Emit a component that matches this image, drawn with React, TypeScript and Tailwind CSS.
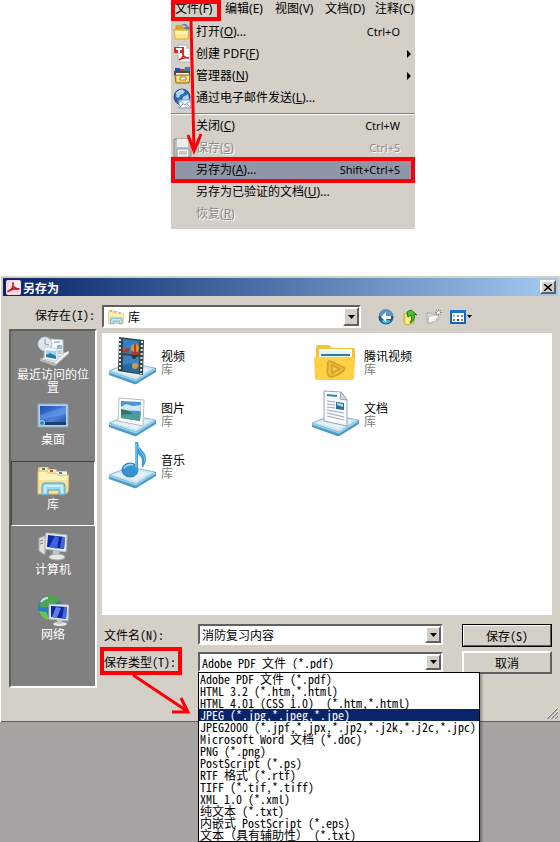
import { useState } from "react";
import type { ReactNode } from "react";

const menus = [
  { name: "文件", hotkey: "F" },
  { name: "编辑", hotkey: "E" },
  { name: "视图", hotkey: "V" },
  { name: "文档", hotkey: "D" },
  { name: "注释", hotkey: "C" },
];

const fileTypes = [
  "Adobe PDF 文件 (*.pdf)",
  "HTML 3.2 (*.htm,*.html)",
  "HTML 4.01 (CSS 1.0)  (*.htm,*.html)",
  "JPEG (*.jpg,*.jpeg,*.jpe)",
  "JPEG2000 (*.jpf,*.jpx,*.jp2,*.j2k,*.j2c,*.jpc)",
  "Microsoft Word 文档 (*.doc)",
  "PNG (*.png)",
  "PostScript (*.ps)",
  "RTF 格式 (*.rtf)",
  "TIFF (*.tif,*.tiff)",
  "XML 1.0 (*.xml)",
  "纯文本 (*.txt)",
  "内嵌式 PostScript (*.eps)",
  "文本（具有辅助性） (*.txt)",
];

const sunken =
  "border-2 border-t-[#606060] border-l-[#606060] border-r-white border-b-white bg-white";
const raised =
  "border-2 border-t-white border-l-white border-r-[#606060] border-b-[#606060] bg-[#d4d0c8]";

/* ---------- menu icons ---------- */

function OpenIcon() {
  return (
    <svg width="20" height="20" viewBox="0 0 20 20">
      <path d="M2 6l1-3h5l2 2h6v12H2z" fill="#dba52a" />
      <path d="M8 4c2-3 6-3 7 1l2-1-1 5-5-3 2-1c-1-2-3-2-5-1z" fill="#5f7fb4" />
      <path d="M1 8h15l-1 9H2z" fill="#ffe68c" stroke="#d8ae40" />
      <path d="M2 9h13l-1 3H3z" fill="#fff3b4" />
    </svg>
  );
}

function PdfIcon() {
  return (
    <svg width="20" height="20" viewBox="0 0 20 20">
      <path d="M5 1h8l4 4v13H5z" fill="#fafafa" stroke="#b4b4b4" />
      <path d="M13 1v4h4z" fill="#ccc" />
      <path d="M1 3h10v6H1z" fill="#c9332e" />
      <path d="M3 4h6v2H7v3H5V6H3z" fill="#fff" />
      <path
        d="M6 16c4-2 5-4 4-8-1 4 2 6 6 6-4-1-7 0-10 2z"
        fill="none"
        stroke="#d8201c"
        strokeWidth="1.500"
      />
    </svg>
  );
}

function OrganizerIcon() {
  return (
    <svg width="20" height="20" viewBox="0 0 20 20">
      <path d="M2 2h5v4H2z" fill="#2850b0" />
      <path d="M7 3h4v3H7z" fill="#e03020" />
      <path d="M12 1h5v5h-5z" fill="#3b7ac0" />
      <path d="M11 3h3v3h-3z" fill="#3b9a40" />
      <path d="M1 5h16v4H1z" fill="#4a4a4a" />
      <path d="M3 7h13v2H3z" fill="#f8f8f8" />
      <path d="M2 9h15l-1 8H3z" fill="#f3ca55" stroke="#93691a" />
      <path d="M4 10h12v5H4z" fill="#ffe68a" />
      <path d="M7 11h6v3H7z" fill="#fff" stroke="#a87c20" />
    </svg>
  );
}

function MailIcon() {
  return (
    <svg width="20" height="21" viewBox="0 0 20 21">
      <circle cx="9" cy="9" r="8" fill="#2d6aae" stroke="#254c88" />
      <path d="M4 4c3-2 6-2 8-1l-2 3-3 1-1 3-3-1zM10 9l5-3 1 5-4 3-3-2z" fill="#a9d3f3" />
      <path d="M3 6c2-3 4-4 7-4" stroke="#e8f6ff" fill="none" />
      <path d="M6 12h12v8H6z" fill="#f4f8ff" stroke="#7c9ac4" />
      <path d="M6 12l6 5 6-5M6 20l4-4M18 20l-4-4" fill="none" stroke="#7c9ac4" />
    </svg>
  );
}

function DiskIcon() {
  return (
    <svg width="20" height="20" viewBox="0 0 20 20">
      <path d="M1 1h15l2 2v16H1z" fill="#bdbdbb" stroke="#8b8b89" />
      <path d="M4 1h11v8H4z" fill="#ededeb" />
      <path d="M4 11h12v8H4z" fill="#f7f7f5" stroke="#999" />
      <path d="M6 14h8M6 16h8" stroke="#999" />
    </svg>
  );
}

/* ---------- dialog icons ---------- */

function AcrobatIcon() {
  return (
    <svg width="15" height="15" viewBox="0 0 15 15">
      <rect width="15" height="15" rx="2" fill="#f9d9e2" />
      <path d="M1 9l6-8h6l1 7-8 2z" fill="#fff" opacity=".6" />
      <path
        d="M1.500 11.500c4-1 6.500-5 5.500-9-1 4 2 7 6.500 6.500-4-1-8 0-12 2.500z"
        fill="none"
        stroke="#c4122f"
        strokeWidth="1.600"
      />
    </svg>
  );
}

function LibraryIcon({ size }: { size: number }) {
  return (
    <svg width={size} height={size} viewBox="0 0 32 32">
      <path d="M1 4q0-2 2-2h8l1 2h7l1 2h10v23H1z" fill="#e9cf7d" />
      <path d="M3 3h7v3H3z" fill="#f5f3d6" />
      <path d="M5 3h3v2H5z" fill="#2f9b3c" />
      <path d="M11 5h8v3h-8z" fill="#fff6d8" />
      <path d="M13 5h3v2h-3z" fill="#e2402b" />
      <path d="M19 7h11v3H19z" fill="#fff" />
      <path d="M22 7h3v2h-3z" fill="#2b8fb0" />
      <path d="M1 6h9l2 2h7l2 2h11l-1 17-4 2H1z" fill="#f7e298" stroke="#dfc068" />
      <path d="M2 7h7l2 2h8l2 2h9v4H2z" fill="#fff3bd" />
      <path
        d="M5 30V21q0-3 3-3h17q3 0 3 3v9h-6v-5H11v5z"
        fill="#9bd6f2"
        stroke="#4a9fd0"
      />
      <path d="M8 28v-6q0-1 1-1h15q1 0 1 1v6" fill="none" stroke="#def6ff" strokeWidth="1.500" />
    </svg>
  );
}

function RecentIcon() {
  return (
    <svg width="32" height="32" viewBox="0 0 32 32">
      <path d="M3 24l16-5 13-2-14 11z" fill="#e6e6e4" />
      <path d="M3 24l15 4v3L3 26zM18 28l14-11v2L18 31z" fill="#b8b8b6" />
      <path d="M14 4l12 1v17l-12-2z" fill="#f7fbff" stroke="#b9c4cc" />
      <path d="M17 7h6" stroke="#4ba0b8" />
      <path d="M20 10h5v4h-5z" fill="#8bb8d0" />
      <path d="M20 16h5M20 18h5" stroke="#8aa" />
      <circle cx="8" cy="9" r="7" fill="#dfe6ec" stroke="#b5c0c9" />
      <path d="M8 4v5l4 1" fill="none" stroke="#8495a2" />
      <path d="M8 12l12 2v12L7 24z" fill="#fff" stroke="#c3d1da" />
      <path d="M9 15l10 1v8L9 22z" fill="#9ad4ee" />
      <path d="M9 20l4-2 6 3v3L9 22z" fill="#287ba9" />
      <path d="M18 28l13-12 1 1-13 12z" fill="#fff" />
    </svg>
  );
}

function DesktopIcon() {
  return (
    <svg width="32" height="32" viewBox="0 0 32 32">
      <defs>
        <linearGradient id="desk" x1="0" y1="0" x2="1" y2="1">
          <stop offset="0" stopColor="#1d4fb8" />
          <stop offset="0.600" stopColor="#4f83e0" />
          <stop offset="1" stopColor="#1c479e" />
        </linearGradient>
      </defs>
      <path d="M1 4h30v23H1z" fill="#b9d2ea" stroke="#8ba4c0" />
      <path d="M3 6h26v19H3z" fill="url(#desk)" />
      <path d="M29 6v8L3 20v-5z" fill="#7eacef" opacity=".4" />
      <path d="M3 22h26v3H3z" fill="#20406c" />
      <circle cx="5" cy="23" r="2.500" fill="#3d7fa5" stroke="#a9dbef" />
    </svg>
  );
}

function ComputerIcon() {
  return (
    <svg width="32" height="32" viewBox="0 0 32 32">
      <path d="M2 8l6-2v19l-6-4z" fill="#dedfda" stroke="#aaa" />
      <path d="M3 11l3-1M3 14l3-1" stroke="#777" />
      <path d="M16 21h6l1 5h-8z" fill="#c5c9cb" />
      <ellipse cx="20" cy="27" rx="8" ry="3" fill="#e5e6e5" stroke="#a9adaf" />
      <path d="M9 3l21 2-1 17-21-3z" fill="#e8eef1" stroke="#b5bdc1" />
      <path d="M11 5l17 2-1 12-17-2z" fill="#0b24a8" />
      <path d="M18 6l4 1-2 12-8-2z" fill="#4a74e6" opacity=".8" />
      <path d="M25 7h3l-1 12-4-1z" fill="#4467d8" />
    </svg>
  );
}

function NetworkIcon() {
  return (
    <svg width="32" height="32" viewBox="0 0 32 32">
      <circle cx="13" cy="13" r="12" fill="#2a7bc4" />
      <path d="M9 2c6-3 12 0 14 4l-6 3-3-1-4 4-4 1-4-2c1-4 4-7 7-9z" fill="#4da54c" />
      <path d="M2 16l7 1 3 6-1 2c-5-1-8-5-9-9z" fill="#6fc24c" />
      <path d="M4 7c2-3 4-4 7-4" stroke="#c1ecef" strokeWidth="2" fill="none" />
      <ellipse cx="23" cy="29" rx="7" ry="2" fill="#e5e6e5" />
      <path d="M20 24h5v5h-5z" fill="#c5c9cb" />
      <path d="M12 9l20 1-1 16-19-2z" fill="#e3ebf1" stroke="#a9b8c0" />
      <path d="M14 11l16 1-1 12-15-2z" fill="#0b24a8" />
      <path d="M19 12l5 1-4 10-5-1z" fill="#5c7fe6" />
      <path d="M27 12h3l-1 12-4-1z" fill="#4467d8" />
    </svg>
  );
}

function Tray({ children }: { children: ReactNode }) {
  return (
    <svg width="48" height="48" viewBox="0 0 48 48">
      <path d="M1 34v4l25 9q2 1 4-1l18-11v-4z" fill="#4c9ac6" />
      <path d="M1 34l20-8 26 5-19 12z" fill="#cfe6f2" stroke="#8cbdd6" />
      <path d="M6 34l15-6 20 4-13 8z" fill="#e4f1f8" />
      <path d="M1 35l27 9 19-12" fill="none" stroke="#8fd0ec" strokeWidth="1.500" />
      {children}
    </svg>
  );
}

function VideoIcon() {
  return (
    <Tray>
      <path d="M11 0l25 3-1 35-25-4z" fill="#3a4845" />
      <path d="M15 2l16 2v14l-16-2z" fill="#2f80c8" />
      <path d="M15 18l16 2v16l-16-3z" fill="#3a83c4" />
      <path d="M15 12l6-1v5l-6-1zM24 14l7 1v3h-7z" fill="#a53a34" />
      <path d="M15 10h2v4h-2z" fill="#d84036" />
      <circle cx="27" cy="11" r="4" fill="#d99432" />
      <path d="M26 7h2v8h-2z" fill="#b8382b" />
      <path d="M23 18h7l-3 4h-2z" fill="#263c38" />
      <path d="M15 28l7-2 9 4v6l-16-3z" fill="#2869a0" />
      <circle cx="27" cy="29" r="3" fill="#d39a40" />
      <path d="M12 2v32" stroke="#dbe8e1" strokeWidth="2" strokeDasharray="2 2" />
      <path d="M34 4l-1 33" stroke="#dbe8e1" strokeWidth="2" strokeDasharray="2 2" />
    </Tray>
  );
}

function PictureIcon() {
  return (
    <Tray>
      <path d="M11 9l25 2-1 26-25-5z" fill="#fff" stroke="#b5bcc0" />
      <path d="M13 12l20 1-1 19-19-3z" fill="#4b93d8" />
      <path d="M13 18l5-3 7 2 8-1-1 6-19-1z" fill="#d3eaf6" />
      <path d="M13 20l5 1 8 4-13 1z" fill="#35785c" />
      <path d="M13 26l10-1 10-2-1 9-19-3z" fill="#4c9d94" />
    </Tray>
  );
}

function MusicIcon() {
  return (
    <Tray>
      <ellipse cx="22" cy="29" rx="8" ry="7" fill="#3393d2" stroke="#2379b6" />
      <path d="M27 1h3c0 8 9 9 8 18-1 4-2 6-4 8 0-8 1-10-4-14v17h-3z" fill="#379cda" />
      <path d="M28 2v24" stroke="#a7daf5" />
      <path d="M30 5c1 6 7 8 7 15" fill="none" stroke="#8acaf0" />
      <path d="M16 27q4-5 9-3" fill="none" stroke="#aaddf7" strokeWidth="1.500" />
    </Tray>
  );
}

function DocumentIcon() {
  return (
    <Tray>
      <path d="M13 2l17 1 6 8v26l-23-5z" fill="#f7fafd" stroke="#97a4ae" />
      <path d="M30 3l-1 7 7 1z" fill="#ccdce8" stroke="#97a4ae" />
      <path d="M16 6l10 1" stroke="#2a8c9c" strokeWidth="2" />
      <path
        d="M16 12l8 1M16 15l8 1M16 18l8 1M16 21l17 3M16 24l17 4M16 27l17 4"
        stroke="#a3a6b6"
      />
      <path d="M25 13l8 1v7l-8-1z" fill="#2d6e96" />
      <path d="M26 14l6 1v3l-6-2z" fill="#a5dbed" />
    </Tray>
  );
}

function TencentIcon() {
  return (
    <svg width="48" height="48" viewBox="0 0 48 48">
      <path d="M5 10q0-2 2-2h11l3 3h21q2 0 2 3v12H5z" fill="#f8c238" />
      <path d="M8 12h33v12H8z" fill="#fff" />
      <path d="M8 14h30v6H8z" fill="#e9f3f5" />
      <path d="M10 17h29v2H10z" fill="#2e7f92" />
      <path d="M3 22q0-2 2-2h37q2 0 2 2l-1 19q0 2-2 2H6q-2 0-2-2z" fill="#ffd044" />
      <path
        d="M17 26q0-3 4-1c11 5 15 6 11 9-4 4-12 7-14 5-3-2-1-8-1-13z"
        fill="#f2c23c"
        stroke="#d3a52d"
        strokeWidth="2"
      />
      <path d="M21 28l8 4-8 4z" fill="#ffd044" stroke="#d3a52d" strokeWidth="2" />
    </svg>
  );
}

function BackIcon() {
  return (
    <svg width="16" height="16" viewBox="0 0 16 16">
      <circle cx="8" cy="8" r="7.500" fill="#1d5a8c" />
      <path d="M1 7a7 7 0 0114 0q-7 2-14 0z" fill="#5c96c4" />
      <path d="M3 12q5 5 10 0-5-3-10 0z" fill="#45b5d8" />
      <path d="M8 3L3 8l5 5v-3h5V7H8z" fill="#fff" />
    </svg>
  );
}

function UpIcon() {
  return (
    <svg width="16" height="16" viewBox="0 0 16 16">
      <path d="M2 5l6-1 4 1v9l-8 2-2-2z" fill="#f5dc62" stroke="#c9a52d" />
      <path d="M4 8l8-2-1 8-7 1z" fill="#fff18a" />
      <path
        d="M5 3l4-2 6 5-3-1c1 5-1 8-4 9 2-3 2-5 1-8L6 8z"
        fill="#4fc42e"
        stroke="#23721b"
      />
    </svg>
  );
}

function NewFolderIcon() {
  return (
    <svg width="16" height="16" viewBox="0 0 16 16">
      <path d="M1 4h4l1 1h6v6l-9 4-2-1z" fill="#dededc" stroke="#aaa" />
      <path d="M3 7l10-1-3 6-8 2z" fill="#f8f8f8" stroke="#c0c0be" />
      <path d="M12.500 0v7M9 3.500h7M10 1l5 5M15 1l-5 5" stroke="#8a8a8a" />
      <circle cx="12.500" cy="3.500" r="1.500" fill="#fff" />
    </svg>
  );
}

function ViewIcon() {
  return (
    <svg width="16" height="16" viewBox="0 0 16 16">
      <path d="M1 2h14v12H1z" fill="#fff" stroke="#1464c0" strokeWidth="2" />
      <path d="M0 1h16v3H0z" fill="#1872d0" />
      <path d="M3 6h2v2H3z" fill="#a8b0b0" />
      <path d="M7 6h2v2H7zM3 10h2v2H3z" fill="#5b8bca" />
      <path d="M11 6h2v2h-2z" fill="#50a478" />
      <path d="M7 10h2v2H7z" fill="#293c9c" />
      <path d="M11 10h2v2h-2z" fill="#df6f4d" />
    </svg>
  );
}

const places = [
  { name: "最近访问的位置", icon: <RecentIcon /> },
  { name: "桌面", icon: <DesktopIcon /> },
  { name: "库", icon: <LibraryIcon size={32} /> },
  { name: "计算机", icon: <ComputerIcon /> },
  { name: "网络", icon: <NetworkIcon /> },
];

const libraries = [
  { name: "视频", icon: <VideoIcon /> },
  { name: "腾讯视频", icon: <TencentIcon /> },
  { name: "图片", icon: <PictureIcon /> },
  { name: "文档", icon: <DocumentIcon /> },
  { name: "音乐", icon: <MusicIcon /> },
];

type MenuRowProps = {
  label: string;
  hotkey: string;
  dots?: boolean;
  shortcut?: string;
  submenu?: boolean;
  disabled?: boolean;
  active?: boolean;
  icon?: ReactNode;
};

function MenuRow({
  label,
  hotkey,
  dots,
  shortcut,
  submenu,
  disabled,
  active,
  icon,
}: MenuRowProps) {
  return (
    <button
      role="menuitem"
      disabled={disabled}
      className={`relative flex h-[22px] w-full items-center text-left whitespace-nowrap ${
        active ? "bg-[#8e96a8]" : ""
      } ${disabled ? "text-[#8c8a86] [text-shadow:1px_1px_0_#fff]" : "text-black"}`}
    >
      <span className="flex w-[25px] shrink-0 pl-[2px]">{icon}</span>
      <span className="flex-1">
        {label}(<u>{hotkey}</u>){dots && "..."}
      </span>
      {shortcut && <span className="pr-[15px] text-[11px]">{shortcut}</span>}
      {submenu && (
        <svg width="4" height="8" viewBox="0 0 4 8" className="mr-1">
          <path d="M0 0l4 4-4 4z" />
        </svg>
      )}
      {active && <span className="absolute -inset-y-[2px] inset-x-0 border-4 border-[#fb0007]" />}
    </button>
  );
}

function FileMenu() {
  return (
    <div className="relative ml-[171px] w-[244px] bg-[#d4d0c8] pb-1 font-['Noto_Sans','Noto_Sans_CJK_SC',sans-serif] text-[12px] leading-4">
      <div role="menubar" className="flex h-[21px] items-start gap-3 pt-px pl-1 whitespace-nowrap">
        {menus.map((m) => (
          <button key={m.name} role="menuitem" className="w-[38px] shrink-0 text-left">
            {m.name}({m.hotkey})
          </button>
        ))}
      </div>
      <div role="menu">
        <MenuRow label="打开" hotkey="O" dots shortcut="Ctrl+O" icon={<OpenIcon />} />
        <MenuRow label="创建 PDF" hotkey="F" submenu icon={<PdfIcon />} />
        <MenuRow label="管理器" hotkey="N" submenu icon={<OrganizerIcon />} />
        <MenuRow label="通过电子邮件发送" hotkey="L" dots icon={<MailIcon />} />
        <hr className="mt-1 mb-px border-t border-[#808080] shadow-[0_1px_0_#fff]" />
        <MenuRow label="关闭" hotkey="C" shortcut="Ctrl+W" />
        <MenuRow label="保存" hotkey="S" shortcut="Ctrl+S" disabled icon={<DiskIcon />} />
        <MenuRow label="另存为" hotkey="A" dots shortcut="Shift+Ctrl+S" active />
        <MenuRow label="另存为已验证的文档" hotkey="U" dots />
        <MenuRow label="恢复" hotkey="R" disabled />
      </div>
      <span className="absolute top-0 left-0 h-[21px] w-[50px] border-4 border-[#fb0007]" />
      <svg
        className="pointer-events-none absolute top-[20px] left-[12px]"
        width="24"
        height="136"
        viewBox="0 0 24 136"
        fill="none"
        stroke="#fb0007"
        strokeWidth="3"
      >
        <path d="M8 0l3 131M5 115l6 16 7-17" />
      </svg>
    </div>
  );
}

function ArrowCap() {
  return (
    <span className={`pointer-events-none flex w-4 shrink-0 items-center justify-center ${raised}`}>
      <svg width="7" height="4" viewBox="0 0 7 4">
        <path d="M0 0h7L3.500 4z" />
      </svg>
    </span>
  );
}

function SaveAsDialog() {
  const [fileName, setFileName] = useState("消防复习内容");
  const [fileType, setFileType] = useState(fileTypes[0]);

  return (
    <section
      aria-label="另存为"
      className="ml-px border-b border-[#606060] bg-[#d4d0c8] pt-[2px] pl-[2px] font-['Noto_Sans_Mono_CJK_SC','Liberation_Mono','Noto_Sans_CJK_SC',monospace] text-[12px] leading-[13px]"
    >
      <header className="mr-[2px] flex h-[18px] items-center bg-linear-to-r from-[#0a246a] to-[#a6caf0] pr-[2px] pl-[3px]">
        <AcrobatIcon />
        <h1 className="ml-[2px] flex-1 font-bold text-white">另存为</h1>
        <button
          aria-label="关闭"
          className={`flex h-[14px] w-4 items-center justify-center ${raised}`}
        >
          <svg width="8" height="7" viewBox="0 0 8 7">
            <path d="M0 0l8 7M8 0L0 7" stroke="#000" strokeWidth="1.600" />
          </svg>
        </button>
      </header>

      <div className="flex items-center pt-[9px]">
        <label htmlFor="folder" className="w-[99px] pb-1 pl-8">
          保存在(I):
        </label>
        <div className={`flex h-[23px] w-[259px] ${sunken}`}>
          <span className="flex items-center pl-1">
            <LibraryIcon size={16} />
          </span>
          <select id="folder" className="min-w-0 flex-1 appearance-none pl-1 outline-none">
            <option>库</option>
          </select>
          <ArrowCap />
        </div>
        <div className="ml-[17px] flex items-center gap-2">
          <button aria-label="后退"><BackIcon /></button>
          <button aria-label="向上"><UpIcon /></button>
          <button aria-label="新建文件夹"><NewFolderIcon /></button>
          <button aria-label="视图" className="flex items-center gap-px">
            <ViewIcon />
            <svg width="5" height="3" viewBox="0 0 5 3">
              <path d="M0 0h5L2.500 3z" />
            </svg>
          </button>
        </div>
      </div>

      <div className="mt-px flex pr-2 pl-[6px]">
        <nav className="h-[359px] w-[88px] shrink-0 border-2 border-t-[#606060] border-r-white border-b-white border-l-[#606060] bg-[#808080] text-white">
          {places.map((p) => (
            <button
              key={p.name}
              className={`flex h-[65px] w-full flex-col items-center border px-[3px] pt-[3px] ${
                p.name === "库"
                  ? "border-t-[#404040] border-r-white border-b-white border-l-[#404040]"
                  : "border-transparent"
              }`}
            >
              {p.icon}
              <span>{p.name}</span>
            </button>
          ))}
        </nav>

        <div className="ml-[5px] min-w-0 flex-1 pt-1">
          <ul className="grid h-[282px] grid-cols-[203px_1fr] content-start bg-white pt-1 pl-[6px]">
            {libraries.map((l) => (
              <li key={l.name} className="flex h-[52px] items-start">
                {l.icon}
                <div className="mt-3 ml-[5px]">
                  <p>{l.name}</p>
                  <p className="text-[#808080]">库</p>
                </div>
              </li>
            ))}
          </ul>

          <div className="mt-[9px] flex">
            <div className="min-w-0 flex-1">
              <div className="flex h-[21px] items-center">
                <label htmlFor="file-name" className="w-24 shrink-0 pl-[2px]">
                  文件名(N):
                </label>
                <div className={`flex h-[21px] min-w-0 flex-1 ${sunken}`}>
                  <input
                    id="file-name"
                    value={fileName}
                    onChange={(e) => setFileName(e.target.value)}
                    className="min-w-0 flex-1 pl-[2px] outline-none"
                  />
                  <ArrowCap />
                </div>
              </div>

              <div className="relative mt-[7px] flex h-5 items-center">
                <label htmlFor="file-type" className="w-24 shrink-0 pb-[2px] pl-[2px]">
                  保存类型(T):
                </label>
                <div className={`flex h-5 min-w-0 flex-1 ${sunken}`}>
                  <select
                    id="file-type"
                    value={fileType}
                    onChange={(e) => setFileType(e.target.value)}
                    className="min-w-0 flex-1 appearance-none pl-[2px] outline-none"
                  >
                    {fileTypes.map((t) => (
                      <option key={t}>{t}</option>
                    ))}
                  </select>
                  <ArrowCap />
                </div>

                {/* open list hangs below the combo box and past the window edge */}
                <ul
                  role="listbox"
                  className="absolute top-5 left-24 z-10 w-[282px] border border-black bg-white leading-3 shadow-[2px_2px_2px_#00000050]"
                >
                  {fileTypes.map((t) => (
                    <li
                      key={t}
                      role="option"
                      aria-selected={t.startsWith("JPEG ")}
                      className={`h-3 pl-px whitespace-pre ${
                        t.startsWith("JPEG ") ? "bg-[#0a246a] text-white" : ""
                      }`}
                    >
                      {t}
                    </li>
                  ))}
                </ul>

                <span className="absolute -top-[5px] -left-[2px] h-7 w-[82px] border-4 border-[#fb0007]" />
                <svg
                  className="pointer-events-none absolute top-[22px] left-[28px]"
                  width="62"
                  height="42"
                  viewBox="0 0 62 42"
                  fill="none"
                  stroke="#fb0007"
                  strokeWidth="3"
                >
                  <path d="M3 1l54 36M51 24l7 14-16 0" />
                </svg>
              </div>
            </div>

            <div className="ml-[19px] flex w-[90px] flex-col gap-1">
              <button className={`h-[23px] outline outline-black -outline-offset-1 ${raised}`}>
                保存(S)
              </button>
              <button className={`h-[23px] ${raised}`}>取消</button>
            </div>
          </div>
        </div>
      </div>

      <div className="flex h-[33px] items-end justify-end pr-[2px] pb-[2px]">
        <svg width="12" height="12" viewBox="0 0 12 12">
          <path d="M1 12L12 1M5 12l7-7M9 12l3-3" stroke="#808080" strokeWidth="1.500" />
          <path d="M0 12L12 0M4 12l8-8M8 12l4-4" stroke="#fff" strokeWidth=".700" />
        </svg>
      </div>
    </section>
  );
}

export default function App() {
  return (
    <main className="bg-white text-black">
      <FileMenu />
      <div className="mt-[47px]">
        <SaveAsDialog />
      </div>
      <div className="h-[120px] bg-[#a6a5a1]" />
    </main>
  );
}
